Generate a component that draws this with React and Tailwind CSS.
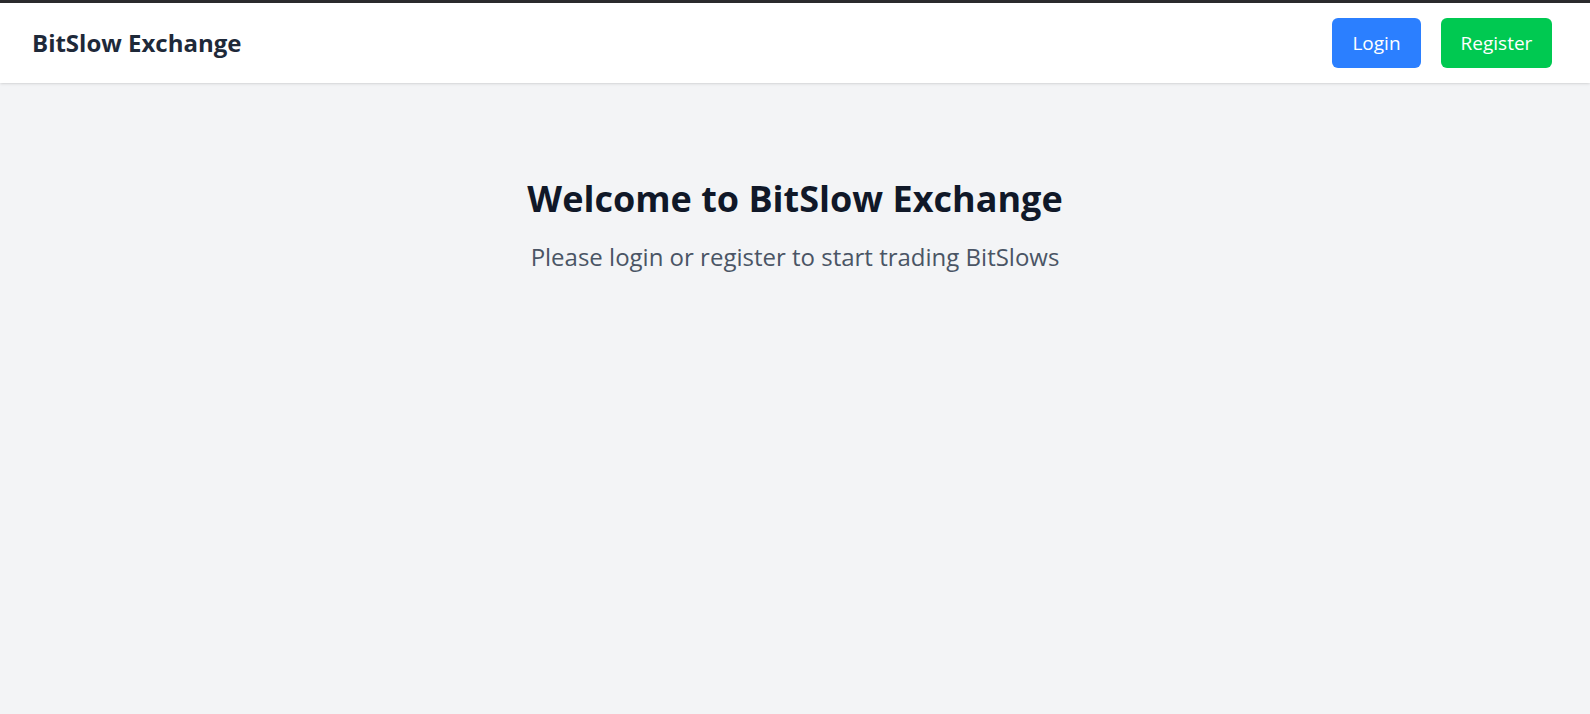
import React from 'react';

export default function App() {
  return (
    <div className="min-h-screen bg-gray-100 font-['Open_Sans',sans-serif]">
      <div className="h-[3px] bg-[#2b2b2e]" />
      <header className="h-[80px] bg-white shadow flex items-center justify-between pl-8 pr-[38px]">
        <h1 className="text-2xl font-bold text-gray-800">BitSlow Exchange</h1>
        <div className="flex gap-5">
          <button className="h-[50px] w-[89px] rounded-md bg-blue-500 text-white text-[19px]">Login</button>
          <button className="h-[50px] w-[111px] rounded-md bg-green-500 text-white text-[19px]">Register</button>
        </div>
      </header>
      <main className="flex flex-col items-center pt-[96px] text-center">
        <h2 className="text-4xl font-bold text-gray-900">Welcome to BitSlow Exchange</h2>
        <p className="mt-[22px] text-2xl text-gray-600">Please login or register to start trading BitSlows</p>
      </main>
    </div>
  );
}
